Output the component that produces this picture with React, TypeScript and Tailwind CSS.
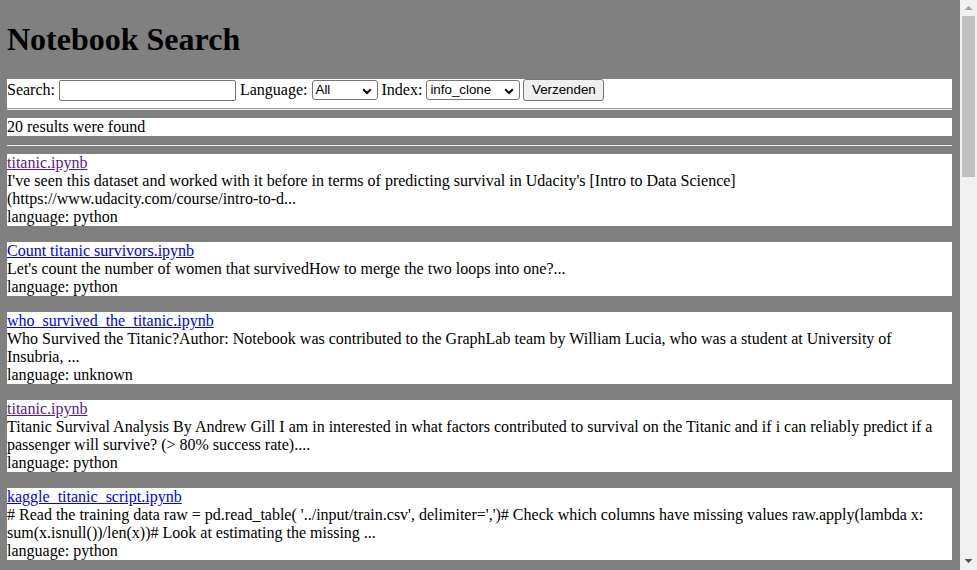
import { useState } from 'react'

type Result = {
  name: string
  snippet: string
  language: string
  visited?: boolean
}

const results: Result[] = [
  {
    name: 'titanic.ipynb',
    visited: true,
    snippet:
      "I've seen this dataset and worked with it before in terms of predicting survival in Udacity's [Intro to Data Science] (https://www.udacity.com/course/intro-to-d...",
    language: 'python',
  },
  {
    name: 'Count titanic survivors.ipynb',
    snippet: "Let's count the number of women that survivedHow to merge the two loops into one?...",
    language: 'python',
  },
  {
    name: 'who_survived_the_titanic.ipynb',
    snippet:
      'Who Survived the Titanic?Author: Notebook was contributed to the GraphLab team by William Lucia, who was a student at University of Insubria, ...',
    language: 'unknown',
  },
  {
    name: 'titanic.ipynb',
    visited: true,
    snippet:
      'Titanic Survival Analysis By Andrew Gill I am in interested in what factors contributed to survival on the Titanic and if i can reliably predict if a passenger will survive? (> 80% success rate)....',
    language: 'python',
  },
  {
    name: 'kaggle_titanic_script.ipynb',
    snippet:
      "# Read the training data raw = pd.read_table( '../input/train.csv', delimiter=',')# Check which columns have missing values raw.apply(lambda x: sum(x.isnull())/len(x))# Look at estimating the missing ...",
    language: 'python',
  },
]

function Chevron() {
  return (
    <svg width="10" height="7" viewBox="0 0 10 7" className="absolute right-[5px] top-[7px]">
      <path d="M1.2 1.2L5 5l3.8-3.8" fill="none" stroke="#000" strokeWidth="2" />
    </svg>
  )
}

function Select({ value, width }: { value: string; width: string }) {
  return (
    <span
      className={`relative inline-block h-[20px] ${width} rounded-[3px] border border-[#767676] bg-white pl-[3px] text-[13.33px] leading-[18px] text-black`}
      style={{ fontFamily: "'Liberation Sans', Arial, sans-serif" }}
    >
      {value}
      <Chevron />
    </span>
  )
}

function Rule({ onWhite }: { onWhite?: boolean }) {
  return (
    <div>
      <div className={`h-px ${onWhite ? 'bg-[#9a9a9a]' : 'bg-[#7a7a7a]'}`} />
      <div className="h-px bg-[#eeeeee]" />
    </div>
  )
}

// classic browser scrollbar, drawn since the page itself is clipped to the window
function Scrollbar() {
  return (
    <div className="flex h-screen w-[17px] shrink-0 flex-col bg-[#f1f1f1]">
      <svg width="17" height="16" viewBox="0 0 17 16" className="shrink-0">
        <polygon points="4.5,10 8.5,6 12.5,10" fill="#a3a3a3" />
      </svg>
      <div className="mx-[2px] h-[161px] bg-[#c1c1c1]" />
      <div className="flex-1" />
      <svg width="17" height="17" viewBox="0 0 17 17" className="shrink-0">
        <polygon points="4.5,6 8.5,10 12.5,6" fill="#505050" />
      </svg>
    </div>
  )
}

export default function App() {
  const [query, setQuery] = useState('')

  return (
    <div className="flex h-screen overflow-hidden">
      <div
        className="flex-1 overflow-hidden bg-[#808080] pl-[7px] pr-2 pt-[21px] pb-2 text-[16px] text-black"
        style={{ fontFamily: "'Liberation Serif', 'Times New Roman', serif" }}
      >
        <h1 className="text-[32px] leading-[37px] font-bold mb-[21px]">Notebook Search</h1>

        {/* search form */}
        <div className="bg-white">
          <form className="flex items-center h-[22px] leading-[18px]" onSubmit={(e) => e.preventDefault()}>
            <span>Search:</span>
            <input
              value={query}
              onChange={(e) => setQuery(e.target.value)}
              className="ml-[4px] h-[21px] w-[177px] rounded-[2px] border border-[#767676] bg-white px-[2px] text-[13.33px] outline-none"
              style={{ fontFamily: "'Liberation Sans', Arial, sans-serif" }}
            />
            <span className="ml-[4px]">Language:</span>
            <span className="ml-[4px] flex">
              <Select value="All" width="w-[66px]" />
            </span>
            <span className="ml-[4px]">Index:</span>
            <span className="ml-[4px] flex">
              <Select value="info_clone" width="w-[94px]" />
            </span>
            <button
              type="submit"
              className="ml-[3px] h-[22px] w-[81px] rounded-[3px] border border-[#767676] bg-[#efefef] text-[13.33px] leading-[20px] text-black"
              style={{ fontFamily: "'Liberation Sans', Arial, sans-serif" }}
            >
              Verzenden
            </button>
          </form>
          <div className="h-[7px]" />
          <Rule onWhite />
        </div>

        <div className="mt-2 bg-white leading-[18px]">20 results were found</div>

        <div className="mt-2">
          <Rule />
        </div>

        {/* results */}
        <div className="mt-2 flex flex-col gap-4">
          {results.map((r, i) => (
            <div key={i} className="bg-white leading-[18px]">
              <a href="#" className={`underline ${r.visited ? 'text-[#551a8b]' : 'text-[#0000ee]'}`}>
                {r.name}
              </a>
              <div>{r.snippet}</div>
              <div>language: {r.language}</div>
            </div>
          ))}
        </div>
      </div>
      <Scrollbar />
    </div>
  )
}
